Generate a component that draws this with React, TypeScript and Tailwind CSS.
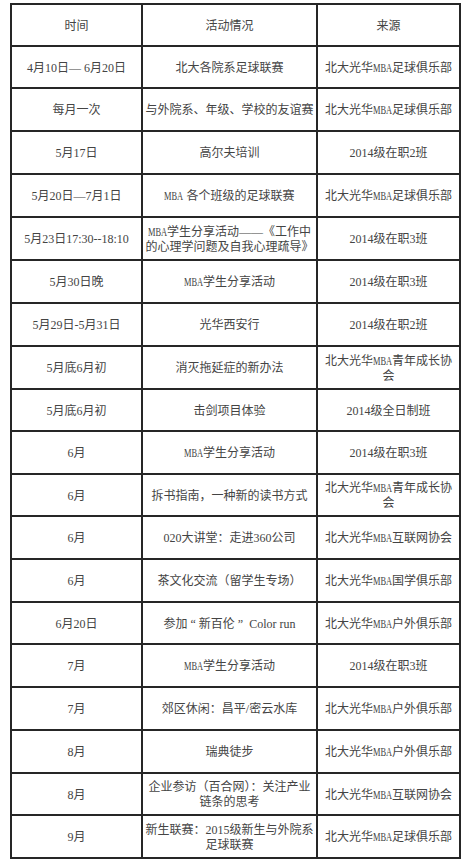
import React from "react";

const fmt = (s: string): React.ReactNode =>
  s.split(/(MBA)/).map((part, k) =>
    part === "MBA" ? (
      <span key={k} className="inline-block w-[19px] text-left align-baseline">
        <span className="inline-block origin-left scale-x-[0.7]">MBA</span>
      </span>
    ) : (
      <React.Fragment key={k}>{part}</React.Fragment>
    )
  );

const L = ({ a, b }: { a: string; b: string }) => (
  <>
    {fmt(a)}
    <br />
    {fmt(b)}
  </>
);

type Row = { h: string; c: React.ReactNode[] };

const rows: Row[] = [
  { h: "h-[42px]", c: ["时间", "活动情况", "来源"] },
  { h: "h-[42px]", c: ["4月10日— 6月20日", "北大各院系足球联赛", "北大光华MBA足球俱乐部"] },
  { h: "h-[43px]", c: ["每月一次", "与外院系、年级、学校的友谊赛", "北大光华MBA足球俱乐部"] },
  { h: "h-[43px]", c: ["5月17日", "高尔夫培训", "2014级在职2班"] },
  { h: "h-[43px]", c: ["5月20日—7月1日", "MBA 各个班级的足球联赛", "北大光华MBA足球俱乐部"] },
  {
    h: "h-[43px]",
    c: [
      "5月23日17:30--18:10",
      <L a="MBA学生分享活动——《工作中" b="的心理学问题及自我心理疏导》" />,
      "2014级在职3班",
    ],
  },
  { h: "h-[43px]", c: ["5月30日晚", "MBA学生分享活动", "2014级在职3班"] },
  { h: "h-[43px]", c: ["5月29日-5月31日", "光华西安行", "2014级在职2班"] },
  { h: "h-[43px]", c: ["5月底6月初", "消灭拖延症的新办法", <L a="北大光华MBA青年成长协" b="会" />] },
  { h: "h-[42px]", c: ["5月底6月初", "击剑项目体验", "2014级全日制班"] },
  { h: "h-[43px]", c: ["6月", "MBA学生分享活动", "2014级在职3班"] },
  { h: "h-[42px]", c: ["6月", "拆书指南，一种新的读书方式", <L a="北大光华MBA青年成长协" b="会" />] },
  { h: "h-[43px]", c: ["6月", "020大讲堂：走进360公司", "北大光华MBA互联网协会"] },
  { h: "h-[43px]", c: ["6月", "茶文化交流（留学生专场）", "北大光华MBA国学俱乐部"] },
  {
    h: "h-[42px]",
    c: [
      "6月20日",
      <>
        参加<span className="px-[3px]">“</span>新百伦<span className="px-[3px]">”</span> Color run
      </>,
      "北大光华MBA户外俱乐部",
    ],
  },
  { h: "h-[43px]", c: ["7月", "MBA学生分享活动", "2014级在职3班"] },
  { h: "h-[43px]", c: ["7月", "郊区休闲：昌平/密云水库", "北大光华MBA户外俱乐部"] },
  { h: "h-[43px]", c: ["8月", "瑞典徒步", "北大光华MBA户外俱乐部"] },
  {
    h: "h-[42px]",
    c: ["8月", <L a="企业参访（百合网）：关注产业" b="链条的思考" />, "北大光华MBA互联网协会"],
  },
  {
    h: "h-[43px]",
    c: ["9月", <L a="新生联赛：2015级新生与外院系" b="足球联赛" />, "北大光华MBA足球俱乐部"],
  },
];

export default function App() {
  return (
    <div
      className="min-h-screen bg-white pt-[3px] pl-[10px] text-[12px] leading-[15px] text-[#444444]"
      style={{ fontFamily: "'Liberation Serif', 'Noto Sans CJK SC', serif" }}
    >
      <div className="grid w-fit grid-cols-[131px_175px_143px] border-l-2 border-t-2 border-[#262626]">
        {rows.map((r, i) =>
          r.c.map((cell, j) => (
            <div
              key={`${i}-${j}`}
              className={`${r.h} flex items-center justify-center overflow-visible whitespace-nowrap border-b-2 border-r-2 border-[#262626] pt-[2px] text-center`}
            >
              <span>{typeof cell === "string" ? fmt(cell) : cell}</span>
            </div>
          ))
        )}
      </div>
    </div>
  );
}
